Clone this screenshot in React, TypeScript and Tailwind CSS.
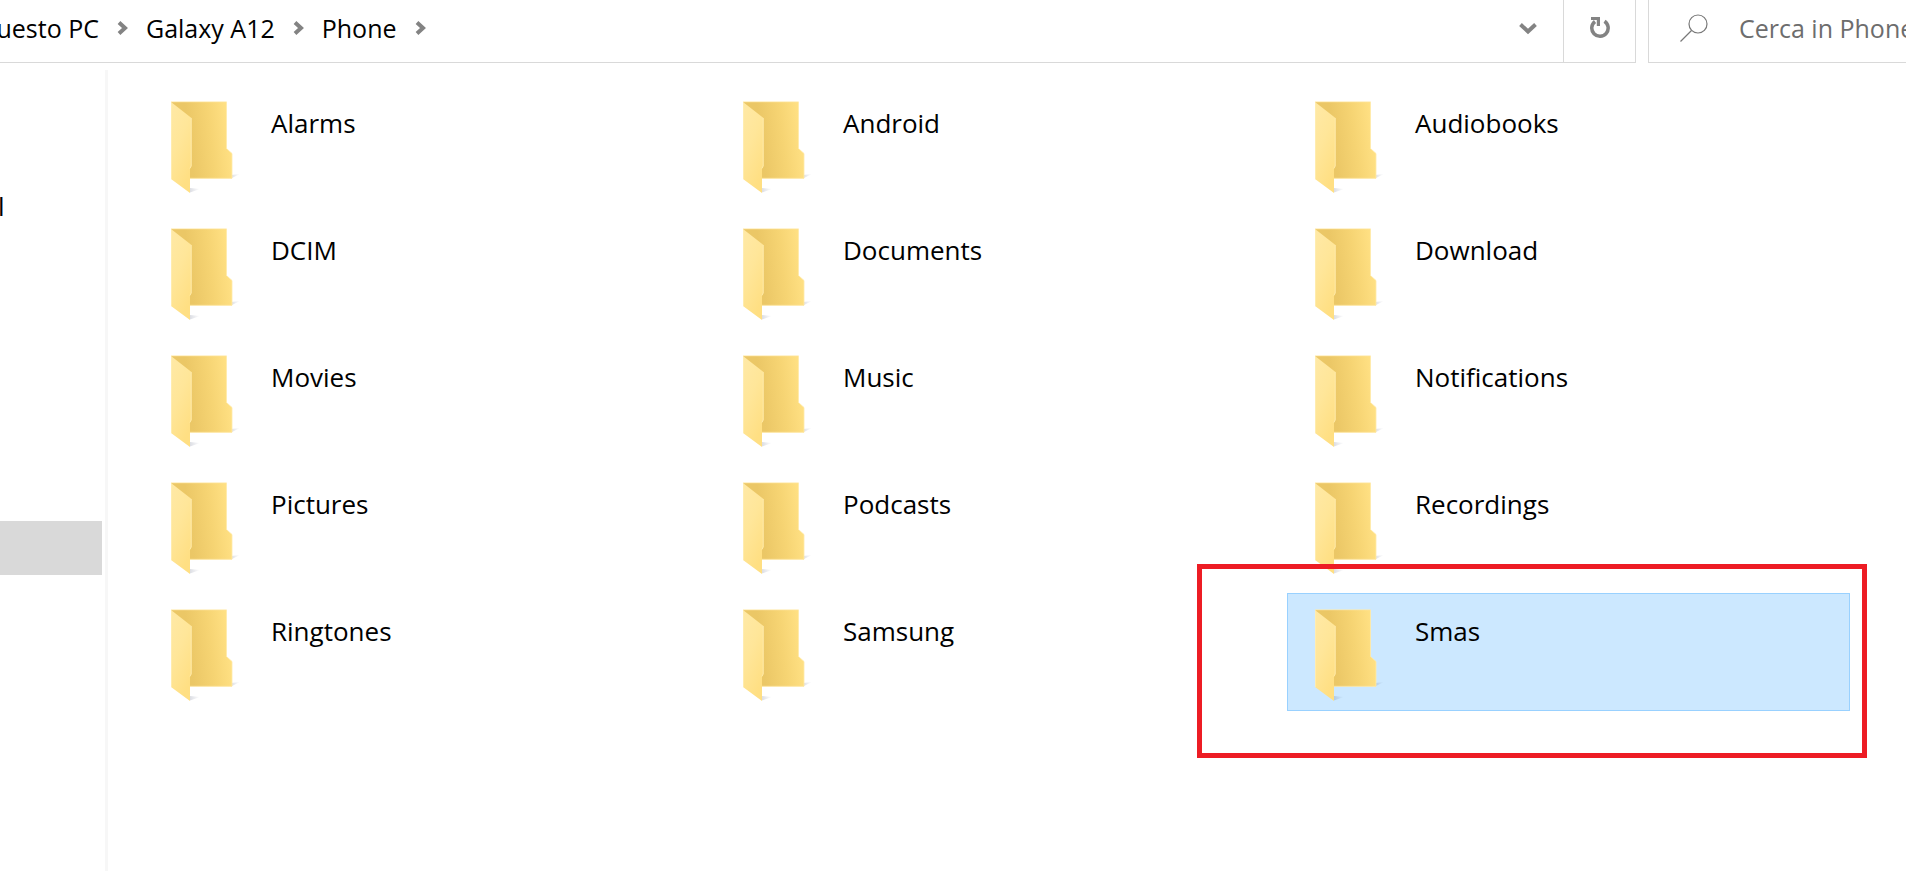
import { useId, useState } from "react";

const FOLDERS = [
  "Alarms", "Android", "Audiobooks",
  "DCIM", "Documents", "Download",
  "Movies", "Music", "Notifications",
  "Pictures", "Podcasts", "Recordings",
  "Ringtones", "Samsung", "Smas",
];

const PATH = ["Questo PC", "Galaxy A12", "Phone"];

function ChevronRight() {
  return (
    <svg width="11" height="14" viewBox="0 0 11 14" fill="none" aria-hidden="true">
      <path d="M2 1.5 8 7l-6 5.500" stroke="#838383" strokeWidth="4" />
    </svg>
  );
}

function FolderIcon() {
  const id = useId();
  return (
    <svg width="72" height="96" viewBox="0 0 72 96" className="shrink-0" aria-hidden="true">
      <defs>
        <linearGradient id={`${id}-back`} x1="0" y1="0.55" x2="1" y2="0.4">
          <stop offset="0.3" stopColor="#ebc766" />
          <stop offset="0.65" stopColor="#f6d473" />
          <stop offset="0.95" stopColor="#ffe083" />
        </linearGradient>
        <linearGradient id={`${id}-front`} x1="0" y1="0" x2="0.5" y2="1">
          <stop offset="0" stopColor="#ffe9a6" />
          <stop offset="0.5" stopColor="#ffe699" />
          <stop offset="1" stopColor="#ffdf83" />
        </linearGradient>
        <linearGradient id={`${id}-shade`} x1="0" y1="0" x2="1" y2="0">
          <stop offset="0" stopColor="#3c4666" stopOpacity="0.18" />
          <stop offset="1" stopColor="#3c4666" stopOpacity="0" />
        </linearGradient>
      </defs>
      <path d="M60 74 69 73 60 77.500z" fill={`url(#${id}-shade)`} />
      <path d="M19 87 29 88 19 91.500z" fill={`url(#${id}-shade)`} />
      <path d="M0 1h55.500v46.500l5.500 5V77.500H10z" fill={`url(#${id}-back)`} />
      <path d="M0 .8h55.500v46.700l5.500 5V77.300H19" fill="none" stroke="#ffeaa8" strokeWidth="0.8" />
      <path d="M0 1 20.500 17v48L19 67.500V92L0 78z" fill={`url(#${id}-front)`} />
      <path d="M.5 1.500V78M20.200 17v48l-1.300 2.500" fill="none" stroke="#ffedb4" strokeWidth="0.8" />
    </svg>
  );
}

export default function App() {
  const [selected, setSelected] = useState("Smas");

  return (
    <div className="flex min-h-screen flex-col overflow-hidden bg-white font-['Open_Sans','Noto_Sans',sans-serif] text-[26px] leading-9 text-black">
      <header className="flex h-[63px] gap-3 text-[25px]">
        <div className="flex min-w-0 flex-1 border-r border-b border-[#d9d9d9]">
          <nav aria-label="Percorso" className="-ml-[23px] flex flex-1 items-center pb-[6px]">
            {PATH.map(p => (
              <div key={p} className="flex items-center">
                <a href="#" className="whitespace-nowrap">{p}</a>
                <span className="px-[18px]"><ChevronRight /></span>
              </div>
            ))}
          </nav>
          <button aria-label="Percorsi recenti" className="flex w-[70px] items-center justify-center pb-1">
            <svg width="18" height="12" viewBox="0 0 18 12" fill="none">
              <path d="M1.500 1.500 9 8.500l7.500-7" stroke="#838383" strokeWidth="4" />
            </svg>
          </button>
          <button aria-label="Aggiorna" className="flex w-[72px] items-center justify-center border-l border-[#d9d9d9] pb-2">
            <svg width="22" height="22" viewBox="0 0 22 22" fill="none">
              <path d="M15.500 5.200A8.200 8.200 0 1 1 6 5.500" stroke="#838383" strokeWidth="3.500" />
              <path d="M2 1h9v9H7.800V4H2z" fill="#838383" />
            </svg>
          </button>
        </div>
        <label className="flex w-[258px] items-center overflow-hidden border-b border-l border-[#d9d9d9] pb-[6px] pl-[31px]">
          <svg width="28" height="28" viewBox="0 0 28 28" fill="none" className="shrink-0" aria-hidden="true">
            <circle cx="18" cy="10" r="9" stroke="#787878" strokeWidth="1.200" />
            <path d="M11.500 16.500.5 27.500" stroke="#787878" strokeWidth="1.200" />
          </svg>
          <input
            type="text"
            placeholder="Cerca in Phone"
            aria-label="Cerca in Phone"
            className="ml-[31px] w-[240px] shrink-0 outline-none placeholder:text-[#6d6d6d]"
          />
        </label>
      </header>

      <div className="flex flex-1 pt-[7px]">
        <aside className="w-[105px] shrink-0 pt-[109px] pr-[3px]">
          <a href="#" className="-ml-[2px] flex h-[54px] items-center">l</a>
          <div className="mt-[288px] h-[54px] bg-[#d9d9d9]" />
        </aside>
        <div className="w-[3px] shrink-0 bg-[#f7f7f7]" />
        <main className="flex-1 pt-[15px] pr-14 pl-[35px]">
          <ul className="grid grid-cols-3 gap-[9px]">
            {FOLDERS.map(name => (
              <li key={name} className="relative">
                <button
                  onClick={() => setSelected(name)}
                  className={`flex h-[118px] w-full items-start border pt-[15px] pl-[27px] text-left ${selected === name ? "border-[#99d1ff] bg-[#cce8ff]" : "border-transparent"}`}
                >
                  <FolderIcon />
                  <span className="pt-1 pl-7">{name}</span>
                </button>
                {name === "Smas" && (
                  <div className="pointer-events-none absolute -top-[29px] -right-[17px] -bottom-[47px] -left-[90px] border-5 border-[#ed1c24]" />
                )}
              </li>
            ))}
          </ul>
        </main>
      </div>
    </div>
  );
}
